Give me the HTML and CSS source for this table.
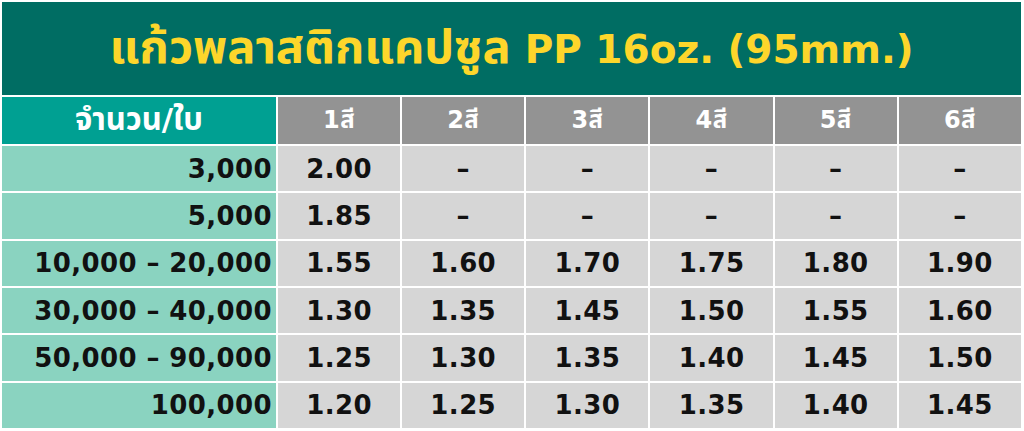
FILE: index.html
```html
<!DOCTYPE html>
<html lang="th">
<head>
<meta charset="utf-8">
<link rel="stylesheet" href="styles.css">
</head>
<body>
<div class="sheet">
  <div class="title"><span class="th">แก้วพลาสติกแคปซูล</span><span class="lat">PP 16oz. (95mm.)</span></div>
  <div class="hq">จำนวน/ใบ</div>
  <div class="hc">1สี</div><div class="hc">2สี</div><div class="hc">3สี</div><div class="hc">4สี</div><div class="hc">5สี</div><div class="hc">6สี</div>

  <div class="q">3,000</div>
  <div class="c">2.00</div><div class="c">–</div><div class="c">–</div><div class="c">–</div><div class="c">–</div><div class="c">–</div>

  <div class="q">5,000</div>
  <div class="c">1.85</div><div class="c">–</div><div class="c">–</div><div class="c">–</div><div class="c">–</div><div class="c">–</div>

  <div class="q">10,000 – 20,000</div>
  <div class="c">1.55</div><div class="c">1.60</div><div class="c">1.70</div><div class="c">1.75</div><div class="c">1.80</div><div class="c">1.90</div>

  <div class="q">30,000 – 40,000</div>
  <div class="c">1.30</div><div class="c">1.35</div><div class="c">1.45</div><div class="c">1.50</div><div class="c">1.55</div><div class="c">1.60</div>

  <div class="q">50,000 – 90,000</div>
  <div class="c">1.25</div><div class="c">1.30</div><div class="c">1.35</div><div class="c">1.40</div><div class="c">1.45</div><div class="c">1.50</div>

  <div class="q">100,000</div>
  <div class="c">1.20</div><div class="c">1.25</div><div class="c">1.30</div><div class="c">1.35</div><div class="c">1.40</div><div class="c">1.45</div>
</div>
</body>
</html>
```

FILE: styles.css
```css
html, body {
  margin: 0;
  padding: 0;
  background: #ffffff;
}
body {
  width: 1024px;
  height: 431px;
  overflow: hidden;
  font-family: "DejaVu Sans", "Noto Sans Thai", "Noto Sans", sans-serif;
}
.sheet {
  box-sizing: border-box;
  width: 1024px;
  height: 431px;
  padding: 2px 3px 3px 2px;
  display: grid;
  grid-template-columns: 274px repeat(6, 1fr);
  grid-template-rows: 93px repeat(7, 1fr);
  gap: 2px;
}
.title {
  grid-column: 1 / -1;
  background: #006d63;
  color: #fdd62b;
  font-weight: 700;
  display: flex;
  align-items: baseline;
  justify-content: center;
  gap: 14px;
  padding-top: 21px;
  box-sizing: border-box;
  line-height: 1;
}
.title .th {
  font-size: 47px;
}
.title .lat {
  font-size: 39px;
}
.hq, .hc, .q, .c {
  display: flex;
  align-items: center;
  font-weight: 700;
  font-size: 26px;
  letter-spacing: 0.4px;
}
.hq {
  background: #00a092;
  color: #ffffff;
  justify-content: center;
  font-size: 31px;
  letter-spacing: 0;
}
.hc {
  background: #939393;
  color: #ffffff;
  justify-content: center;
  font-size: 24px;
}
.q {
  background: #8ad3c0;
  color: #111111;
  justify-content: flex-end;
  padding-right: 4px;
}
.c {
  background: #d6d6d6;
  color: #111111;
  justify-content: center;
}
```
